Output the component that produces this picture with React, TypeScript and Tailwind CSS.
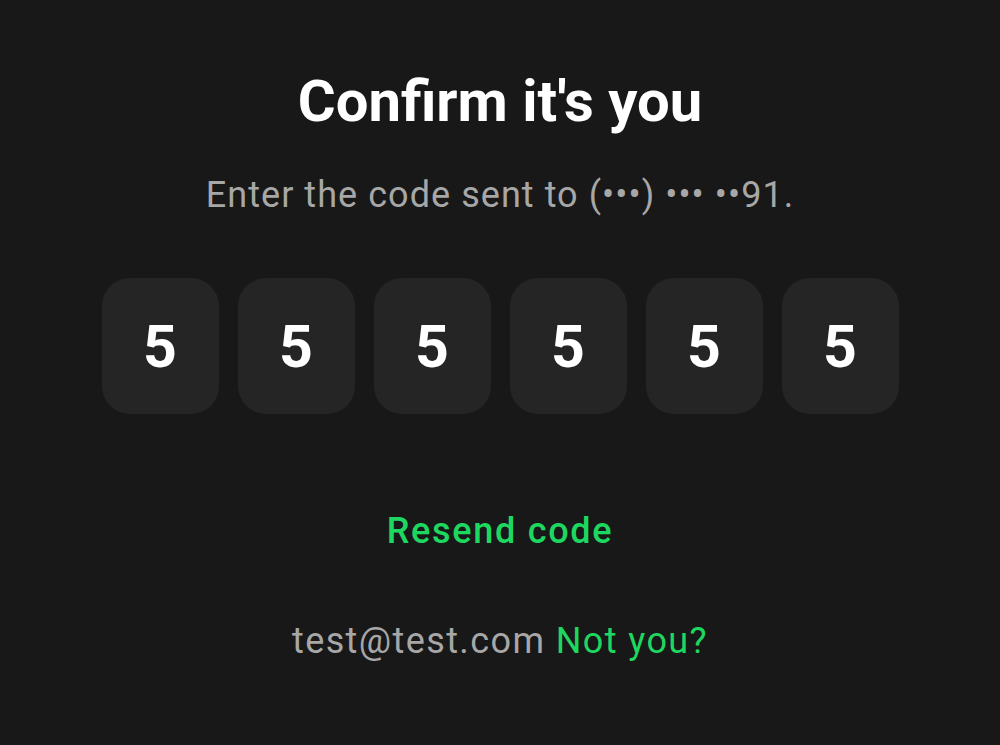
import React from "react";

export default function App() {
  const digits = ["5", "5", "5", "5", "5", "5"];
  return (
    <div
      className="w-[1000px] h-[745px] bg-[#181818] flex flex-col items-center"
      style={{ fontFamily: "Roboto, 'Noto Sans', sans-serif" }}
    >
      <h1 className="mt-[72px] text-[58px] leading-none font-bold text-white">Confirm it's you</h1>
      <p className="mt-[47px] text-[36px] leading-none tracking-[1.05px] text-[#a7a7a7]">
        Enter the code sent to (•••) ••• ••91.
      </p>
      <div className="mt-[65px] flex gap-[19px]">
        {digits.map((d, i) => (
          <div
            key={i}
            className="w-[117px] h-[136px] rounded-[28px] bg-[#252525] flex items-center justify-center text-[59px] leading-none font-bold text-white"
          >
            {d}
          </div>
        ))}
      </div>
      <button className="mt-[99px] text-[36px] leading-none font-medium tracking-[1.7px] text-[#1ed760]">
        Resend code
      </button>
      <p className="mt-[74px] text-[36px] leading-none tracking-[1.4px] text-[#a7a7a7]">
        test@test.com <span className="text-[#1ed760]">Not you?</span>
      </p>
    </div>
  );
}
